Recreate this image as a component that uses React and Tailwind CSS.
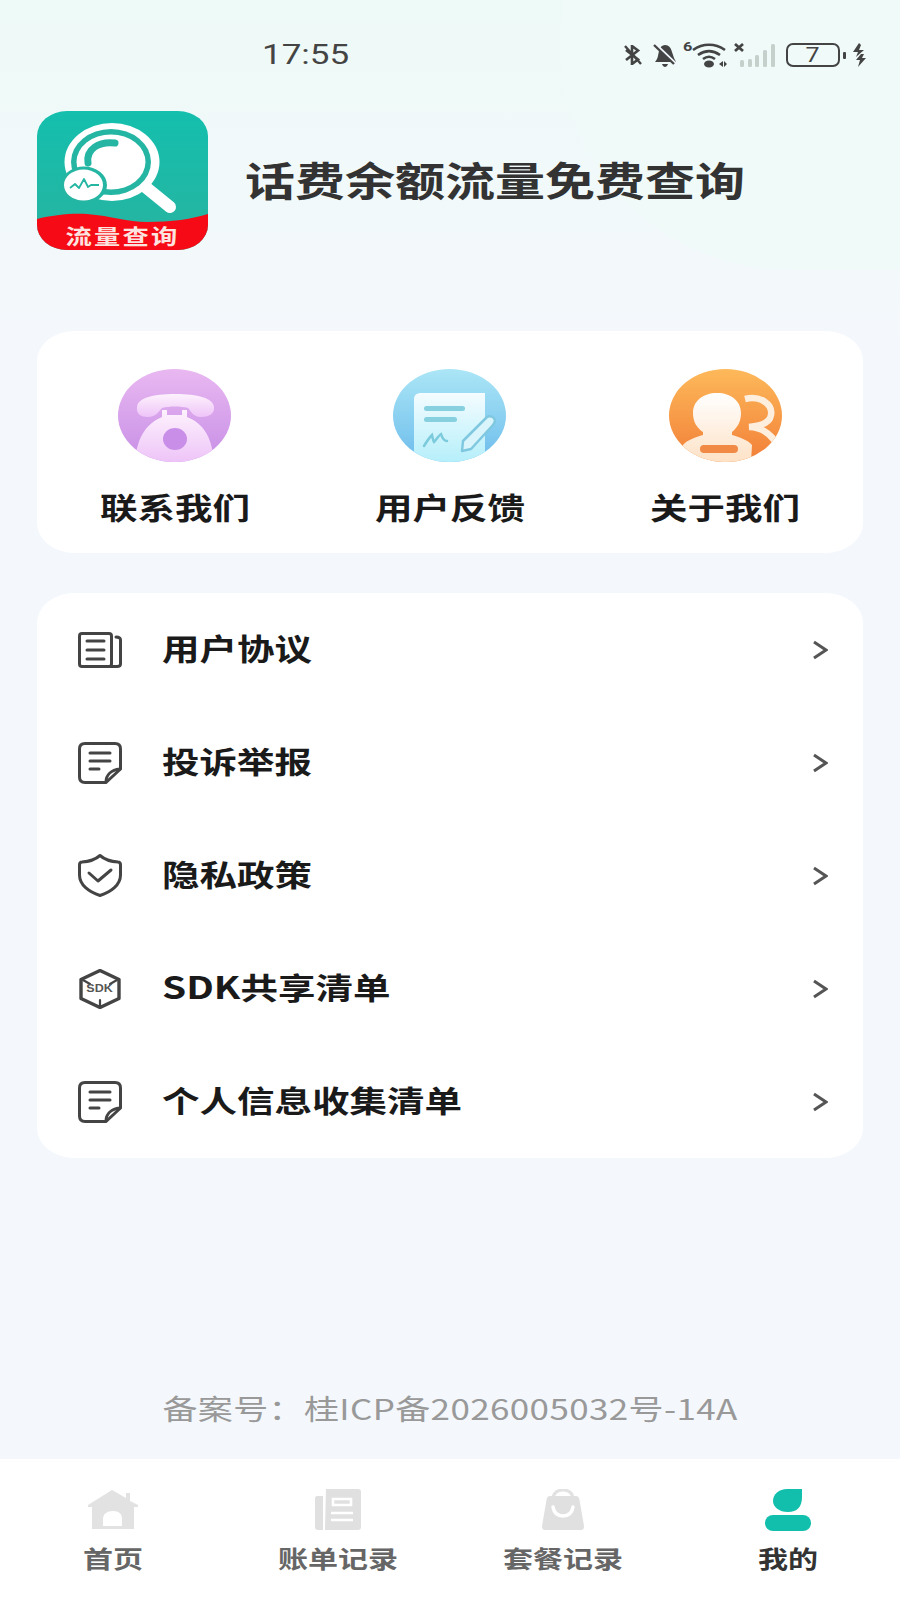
import React from "react";

const FONT = "font-['Noto_Sans_CJK_SC','Noto_Sans',sans-serif]";

function T({ children, center, className = "" }) {
  return (
    <span className={`inline-block whitespace-nowrap scale-x-[1.25] ${center ? "origin-center" : "origin-left"} ${className}`}>
      {children}
    </span>
  );
}

function Logo() {
  return (
    <div className="relative w-[171px] h-[139px] shrink-0">
      <svg width="171" height="139" viewBox="0 0 171 139" className="block">
        <defs>
          <linearGradient id="lg" x1="0" y1="0" x2="0" y2="1">
            <stop offset="0" stopColor="#14bfad" />
            <stop offset="1" stopColor="#28b3a0" />
          </linearGradient>
          <clipPath id="lc"><rect width="171" height="139" rx="30" ry="25" /></clipPath>
        </defs>
        <g clipPath="url(#lc)">
          <rect width="171" height="139" fill="url(#lg)" />
          <path d="M0 108C15 104 35 102 50 103C75 105 90 111 110 111C135 111 155 108 171 103V139H0Z" fill="#f50a16" />
        </g>
        <path d="M106 74L133 96" stroke="#fff" strokeWidth="12" strokeLinecap="round" />
        <ellipse cx="75" cy="51" rx="47.500" ry="39" fill="#fff" />
        <ellipse cx="74" cy="51" rx="40" ry="33" fill="#25b5a3" />
        <ellipse cx="74" cy="51" rx="34.500" ry="27.500" fill="#fff" />
        <path d="M78 32C62 30 49 38 51 52" fill="none" stroke="#25b5a3" strokeWidth="7" strokeLinecap="round" />
        <ellipse cx="47" cy="74" rx="23" ry="18.500" fill="#25b5a3" />
        <ellipse cx="46.500" cy="74" rx="19.500" ry="15.500" fill="#fff" />
        <path d="M33 77L38 73L42 77L47 68L51 76L54 74H62" fill="none" stroke="#25b5a3" strokeWidth="1.800" strokeLinejoin="round" />
      </svg>
      <div className={`absolute left-0 right-0 top-[113px] h-[22px] flex items-center justify-center ${FONT} text-[21px] leading-none font-bold text-[#fde3df]`}>
        <T center className="tracking-[1.8px]">流量查询</T>
      </div>
    </div>
  );
}

function Phone() {
  return (
    <svg width="113" height="93" viewBox="0 0 113 93">
      <defs>
        <linearGradient id="pb" x1="0" y1="0" x2="0" y2="1"><stop offset="0" stopColor="#e9b8f1" /><stop offset="1" stopColor="#c78fe6" /></linearGradient>
        <linearGradient id="pf" x1="0" y1="0" x2="0" y2="1"><stop offset="0" stopColor="#fdf2fd" /><stop offset="1" stopColor="#eec4f8" /></linearGradient>
        <clipPath id="pc"><ellipse cx="56.500" cy="46.500" rx="56.500" ry="46.500" /></clipPath>
      </defs>
      <g clipPath="url(#pc)">
        <rect width="113" height="93" fill="url(#pb)" />
        <path d="M19 38C20 29 34 25 57 25C80 25 95 29 96 38C97 45 90 48 83 48C75 48 73 42 70 39C62 37 52 37 44 39C41 42 38 48 30 48C23 48 18 45 19 38Z" fill="url(#pf)" />
        <path d="M44 41H49V46H64V41H69V48C84 54 94 66 96 93H17C19 66 30 54 44 48Z" fill="url(#pf)" />
        <ellipse cx="57" cy="70" rx="12" ry="11" fill="#c98fe8" />
      </g>
    </svg>
  );
}

function Note() {
  return (
    <svg width="113" height="93" viewBox="0 0 113 93">
      <defs>
        <linearGradient id="nb" x1="0" y1="0" x2="0" y2="1"><stop offset="0" stopColor="#abe6f6" /><stop offset="1" stopColor="#6dbcec" /></linearGradient>
        <linearGradient id="nf" x1="0" y1="0" x2="0" y2="1"><stop offset="0" stopColor="#f4fcff" /><stop offset="1" stopColor="#b5effa" /></linearGradient>
        <clipPath id="nc"><ellipse cx="56.500" cy="46.500" rx="56.500" ry="46.500" /></clipPath>
      </defs>
      <g clipPath="url(#nc)">
        <rect width="113" height="93" fill="url(#nb)" />
        <path d="M21 30C21 26 24 24 28 24H92V93H21Z" fill="url(#nf)" />
        <rect x="31" y="37" width="41" height="5" rx="2.500" fill="#86d0e0" />
        <rect x="31" y="48" width="33" height="5" rx="2.500" fill="#86d0e0" />
        <path d="M31 77C34 72 37 68 39 66C40 70 40 72 41 73C44 70 46 66 48 65C49 68 50 72 54 72" fill="none" stroke="#7ccbdc" strokeWidth="2.500" strokeLinecap="round" />
        <path d="M69 82L70 72L94 48C97 46 101 48 102 51C102 53 101 55 100 56L78 80Z" fill="#d9f5fb" stroke="#7fc8e0" strokeWidth="2.500" strokeLinejoin="round" />
      </g>
    </svg>
  );
}

function Person() {
  return (
    <svg width="113" height="93" viewBox="0 0 113 93">
      <defs>
        <linearGradient id="ob" x1="0" y1="0" x2="0" y2="1"><stop offset="0" stopColor="#fdb95a" /><stop offset="1" stopColor="#f27f38" /></linearGradient>
        <linearGradient id="of" x1="0" y1="0" x2="0" y2="1"><stop offset="0" stopColor="#fff" /><stop offset="1" stopColor="#fde2c6" /></linearGradient>
        <clipPath id="oc"><ellipse cx="56.500" cy="46.500" rx="56.500" ry="46.500" /></clipPath>
      </defs>
      <g clipPath="url(#oc)">
        <rect width="113" height="93" fill="url(#ob)" />
        <path d="M76 30C92 26 104 36 102 46C101 53 92 57 80 58C92 58 100 64 106 72" fill="none" stroke="#fdeede" strokeWidth="6.500" />
        <path d="M48 24C62 24 72 32 72 44C72 53 68 59 63 63V66C70 68 79 71 83 76L82 93H14V76C18 71 27 68 34 66V63C28 59 24 53 24 44C24 32 34 24 48 24Z" fill="url(#of)" />
        <rect x="31" y="76" width="38" height="8" rx="4" fill="#f08a45" />
      </g>
    </svg>
  );
}

const S = { fill: "none", stroke: "#444", strokeWidth: 3, strokeLinecap: "round", strokeLinejoin: "round" };

function IconBook() {
  return (
    <svg width="44" height="36" viewBox="0 0 44 36">
      <rect x="1.500" y="1.500" width="32" height="33" rx="2.500" {...S} />
      <path d="M9 9H26M9 18H26M9 27H26" {...S} />
      <path d="M38 5C41 5 42.500 6 42.500 8V32C42.500 34 41 34.500 39 34.500H33" {...S} />
    </svg>
  );
}
function IconDoc() {
  return (
    <svg width="44" height="42" viewBox="0 0 44 42">
      <path d="M7 1.500H37C40.500 1.500 42.500 3.500 42.500 7V27L28 40.500H7C3.500 40.500 1.500 38.500 1.500 35V7C1.500 3.500 3.500 1.500 7 1.500Z" {...S} />
      <path d="M12 11H32M12 19H32M12 27H21" {...S} />
      <path d="M28 40C28 33 33 28 42 27" {...S} />
    </svg>
  );
}
function IconShield() {
  return (
    <svg width="44" height="43" viewBox="0 0 44 43">
      <path d="M22 1.500C26 5 32 7.500 40 8C42 8 42.500 9 42.500 11V21C42.500 31 33 38 22 41.500C11 38 1.500 31 1.500 21V11C1.500 9 2 8 4 8C12 7.500 18 5 22 1.500Z" {...S} />
      <path d="M11 19L20 27L33 16" {...S} />
    </svg>
  );
}
function IconSdk() {
  return (
    <div className="relative w-[44px] h-[40px]">
      <svg width="44" height="40" viewBox="0 0 44 40" className="block">
        <path d="M22 1.500L41 10.500V29.500L22 38.500L3 29.500V10.500Z" {...S} strokeWidth="3.400" />
        <path d="M5 11L12 15M39 11L32 15M22 31V38" {...S} strokeWidth="2.200" />
      </svg>
      <div className="absolute inset-0 flex items-center justify-center font-['Liberation_Sans',sans-serif] text-[10px] font-bold text-[#555] leading-none">
        <T center>SDK</T>
      </div>
    </div>
  );
}

const quick = [
  { label: "联系我们", Icon: Phone },
  { label: "用户反馈", Icon: Note },
  { label: "关于我们", Icon: Person },
];
const menu = [
  { label: "用户协议", Icon: IconBook },
  { label: "投诉举报", Icon: IconDoc },
  { label: "隐私政策", Icon: IconShield },
  { label: <><span className="text-[31px]">SDK</span>共享清单</>, Icon: IconSdk },
  { label: "个人信息收集清单", Icon: IconDoc },
];

function NavHome() {
  return (
    <svg width="50" height="40" viewBox="0 0 50 40">
      <path d="M0 15L24 0L38 8V3H42V11L50 15V17H46V39H4V17H0Z" fill="#e2e2e2" />
      <path d="M15 36V29C15 24 19 21 25 21C31 21 34 24 34 29V36Z" fill="#fff" />
    </svg>
  );
}
function NavBill() {
  return (
    <svg width="46" height="42" viewBox="0 0 46 42">
      <path d="M8 7H2C1 7 0 8 0 9V38C0 40 1 41 3 41H8Z" fill="#e0e0e0" />
      <path d="M11 0H43C45 0 46 1 46 3V38C46 40 45 41 43 41H10Z" fill="#e0e0e0" />
      <path d="M18 10H36V16H18Z" fill="none" stroke="#fff" strokeWidth="2.600" />
      <path d="M16 24H38M16 31H38" stroke="#fff" strokeWidth="2.600" />
    </svg>
  );
}
function NavBag() {
  return (
    <svg width="42" height="42" viewBox="0 0 42 42">
      <path d="M11 11C11 4 15 1 21 1C27 1 31 4 31 11" fill="none" stroke="#e2e2e2" strokeWidth="3" />
      <path d="M8 7H34C36 7 37 8 37.500 11L42 37C42 40 41 41 39 41H3C1 41 0 40 0 37L4.500 11C5 8 6 7 8 7Z" fill="#e0e0e0" />
      <path d="M11 18C12 24 16 27 21 27C26 27 30 24 31 18" fill="none" stroke="#fff" strokeWidth="3.500" strokeLinecap="round" />
    </svg>
  );
}
function NavMe() {
  return (
    <svg width="46" height="42" viewBox="0 0 46 42">
      <path d="M22 0H37V8C37 18 32 23 23 23C14 23 8 18 8 12C8 5 14 0 22 0Z" fill="#11bfac" />
      <rect x="0" y="26" width="46" height="16" rx="8" fill="#11bfac" />
    </svg>
  );
}

const nav = [
  { label: "首页", Icon: NavHome, color: "text-[#666]" },
  { label: "账单记录", Icon: NavBill, color: "text-[#666]" },
  { label: "套餐记录", Icon: NavBag, color: "text-[#666]" },
  { label: "我的", Icon: NavMe, color: "text-[#333]" },
];

function StatusIcons() {
  const c = "#444";
  return (
    <div className="flex items-center h-[30px]">
      <svg width="20" height="20" viewBox="0 0 20 20" className="mr-[9px]">
        <path d="M3 5L15 14.500L9 19V1L15 5.500L3 15" fill="none" stroke={c} strokeWidth="2.600" />
        <path d="M2 1L18 19" stroke={c} strokeWidth="2.400" />
      </svg>
      <svg width="26" height="24" viewBox="0 0 26 24" className="mr-[5px]">
        <path d="M3 19C6 16 6 12 7 8C8 4 10 2 13 2C17 2 19 5 20 9L22 15L24 19Z" fill={c} />
        <path d="M10 21H16C15.500 23 14 24 13 24C12 24 10.500 23 10 21Z" fill={c} />
        <path d="M3 1L25 22" stroke="#f2f8fd" strokeWidth="3" />
        <path d="M2 2L22 21" stroke={c} strokeWidth="2.400" />
      </svg>
      <div className="relative w-[46px] h-[26px]">
        <span className="absolute left-0 top-[-2px] font-['Roboto',sans-serif] text-[13px] font-bold leading-none text-[#444]"><T>6</T></span>
        <svg width="46" height="26" viewBox="0 0 46 26" className="absolute left-0 top-0">
          <path d="M10 8C20 1 32 1 42 8" fill="none" stroke={c} strokeWidth="2.600" />
          <path d="M15 13C22 8 30 8 37 13" fill="none" stroke={c} strokeWidth="2.600" />
          <path d="M20 17C24 14 28 14 32 17" fill="none" stroke={c} strokeWidth="2.600" />
          <ellipse cx="26" cy="22" rx="5" ry="3.500" fill={c} />
          <path d="M36 22L40 19V25ZM44 22L41 19V25Z" fill={c} />
        </svg>
      </div>
      <svg width="42" height="26" viewBox="0 0 42 26" className="ml-[5px] mr-[10px]">
        <path d="M1 2L9 9M9 2L1 9" stroke={c} strokeWidth="2.800" />
        <rect x="6" y="18" width="4" height="7" rx="1.500" fill="#c5d0cc" />
        <rect x="14" y="17" width="4" height="8" rx="1.500" fill="#c5d0cc" />
        <rect x="21" y="13" width="4" height="12" rx="1.500" fill="#c5d0cc" />
        <rect x="29" y="8" width="4" height="17" rx="1.500" fill="#c5d0cc" />
        <rect x="37" y="2" width="4" height="23" rx="1.500" fill="#c5d0cc" />
      </svg>
      <div className="w-[54px] h-[24px] rounded-[7px] border-2 border-[#444] flex items-center justify-center font-['Roboto',sans-serif] text-[20px] leading-none text-[#444]">
        <T center>7</T>
      </div>
      <div className="w-[3px] h-[7px] bg-[#444] rounded-[1px] ml-[3px] mr-[7px]" />
      <svg width="13" height="24" viewBox="0 0 13 24">
        <path d="M6 0L0 9L5 9L3 14L11 7L6 7L8 2ZM8 11L3 17L7 17L5 24L13 15H9L11 11Z" fill={c} />
      </svg>
    </div>
  );
}

export default function App() {
  return (
    <div className={`relative w-[900px] h-[1600px] overflow-hidden bg-[#f4f8fc] flex flex-col ${FONT}`}>
      <div className="absolute left-0 top-0 w-full h-[340px] bg-gradient-to-b from-[#eefaf7] to-[#f4f8fc]" />
      <div className="absolute left-[560px] top-[-190px] w-[560px] h-[460px] rounded-full bg-[#f0faf9]" />

      <div className="relative h-[111px] shrink-0">
        <div className="absolute left-[262px] top-[36px] font-['Roboto',sans-serif] text-[28px] leading-[38px] text-[#444]">
          <T>17:55</T>
        </div>
        <div className="absolute left-[623px] top-[40px]">
          <StatusIcons />
        </div>
      </div>

      <div className="relative flex items-center pl-[37px] h-[139px] shrink-0">
        <Logo />
        <div className="ml-[37px] text-[40px] leading-none font-bold text-[#333] mt-[-3px]">
          <T>话费余额流量免费查询</T>
        </div>
      </div>

      <div className="relative mx-[37px] mt-[81px] h-[222px] rounded-[38px/30px] bg-white grid grid-cols-3 shrink-0">
        {quick.map(({ label, Icon }) => (
          <div key={label} className="flex flex-col items-center pt-[38px]">
            <Icon />
            <div className="mt-[22px] text-[30px] leading-[44px] font-bold text-[#1a1a1a]">
              <T center>{label}</T>
            </div>
          </div>
        ))}
      </div>

      <div className="relative mx-[37px] mt-[40px] rounded-[38px/30px] bg-white shrink-0 flex flex-col">
        {menu.map(({ label, Icon }, i) => (
          <div key={i} className="h-[113px] flex items-center pl-[41px] pr-[35px]">
            <div className="w-[44px] flex justify-center shrink-0"><Icon /></div>
            <div className="ml-[40px] flex-1 text-[30px] leading-[44px] font-bold text-[#1a1a1a] pb-[6px]">
              <T>{label}</T>
            </div>
            <svg width="16" height="20" viewBox="0 0 16 20">
              <path d="M2 2L14 10L2 18" fill="none" stroke="#555" strokeWidth="3" />
            </svg>
          </div>
        ))}
      </div>

      <div className="relative mt-[230px] h-[40px] flex items-center justify-center text-[28px] leading-none text-[#999] shrink-0">
        <T center className="tracking-[0.3px]">备案号：桂ICP备2026005032号-14A</T>
      </div>

      <div className="relative mt-[31px] flex-1 bg-white grid grid-cols-4">
        {nav.map(({ label, Icon, color }) => (
          <div key={label} className="flex flex-col items-center pt-[30px]">
            <div className="h-[42px] flex items-center"><Icon /></div>
            <div className={`mt-[10px] text-[24px] leading-[34px] font-bold ${color}`}>
              <T center>{label}</T>
            </div>
          </div>
        ))}
      </div>
    </div>
  );
}
